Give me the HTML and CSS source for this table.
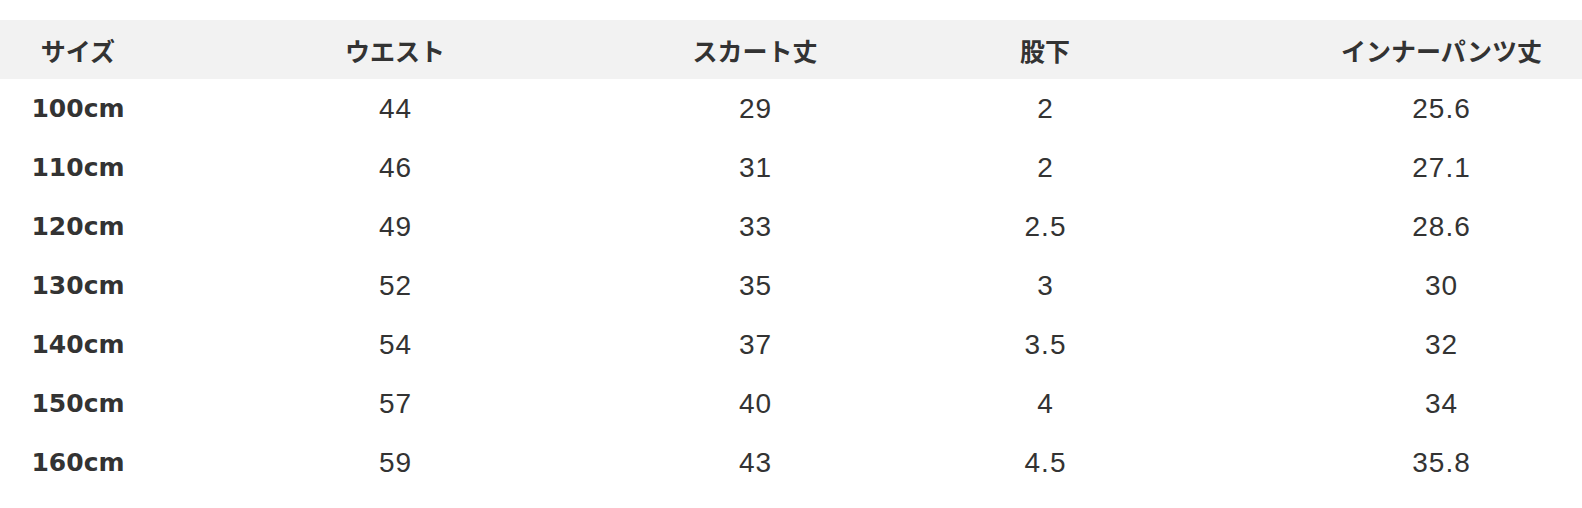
FILE: index.html
```html
<!DOCTYPE html>
<html lang="ja">
<head>
<meta charset="utf-8">
<link rel="stylesheet" href="styles.css">
</head>
<body>
<table class="size-table">
  <colgroup>
    <col class="c1"><col class="c2"><col class="c3"><col class="c4"><col class="c5">
  </colgroup>
  <thead>
    <tr><th>サイズ</th><th>ウエスト</th><th>スカート丈</th><th>股下</th><th class="last">インナーパンツ丈</th></tr>
  </thead>
  <tbody>
    <tr><td class="size">100cm</td><td>44</td><td>29</td><td>2</td><td class="last">25.6</td></tr>
    <tr><td class="size">110cm</td><td>46</td><td>31</td><td>2</td><td class="last">27.1</td></tr>
    <tr><td class="size">120cm</td><td>49</td><td>33</td><td>2.5</td><td class="last">28.6</td></tr>
    <tr><td class="size">130cm</td><td>52</td><td>35</td><td>3</td><td class="last">30</td></tr>
    <tr><td class="size">140cm</td><td>54</td><td>37</td><td>3.5</td><td class="last">32</td></tr>
    <tr><td class="size">150cm</td><td>57</td><td>40</td><td>4</td><td class="last">34</td></tr>
    <tr><td class="size">160cm</td><td>59</td><td>43</td><td>4.5</td><td class="last">35.8</td></tr>
  </tbody>
</table>
</body>
</html>
```
FILE: styles.css
```css
html, body {
  margin: 0;
  padding: 0;
  background: #fff;
}
.size-table {
  margin-top: 20px;
  width: 1582px;
  table-layout: fixed;
  border-collapse: collapse;
  color: #333;
}
.c1 { width: 156px; }
.c2 { width: 478px; }
.c3 { width: 242px; }
.c4 { width: 338px; }
.c5 { width: 368px; }
.size-table th {
  background: #f2f2f2;
  height: 59px;
  padding: 0;
  text-align: center;
  font-family: "Noto Sans CJK JP", sans-serif;
  font-weight: 700;
  font-size: 25px;
}
.size-table td {
  height: 59px;
  padding: 0 0 0 1px;
  text-align: center;
  font-family: "Liberation Sans", Arial, sans-serif;
  font-size: 28px;
  letter-spacing: 1px;
  font-weight: 400;
}
.size-table td.size {
  padding: 0;
  font-family: "DejaVu Sans", sans-serif;
  font-weight: 700;
  font-size: 25px;
  letter-spacing: 0;
}
.size-table .last {
  padding-left: 87px;
}
```
